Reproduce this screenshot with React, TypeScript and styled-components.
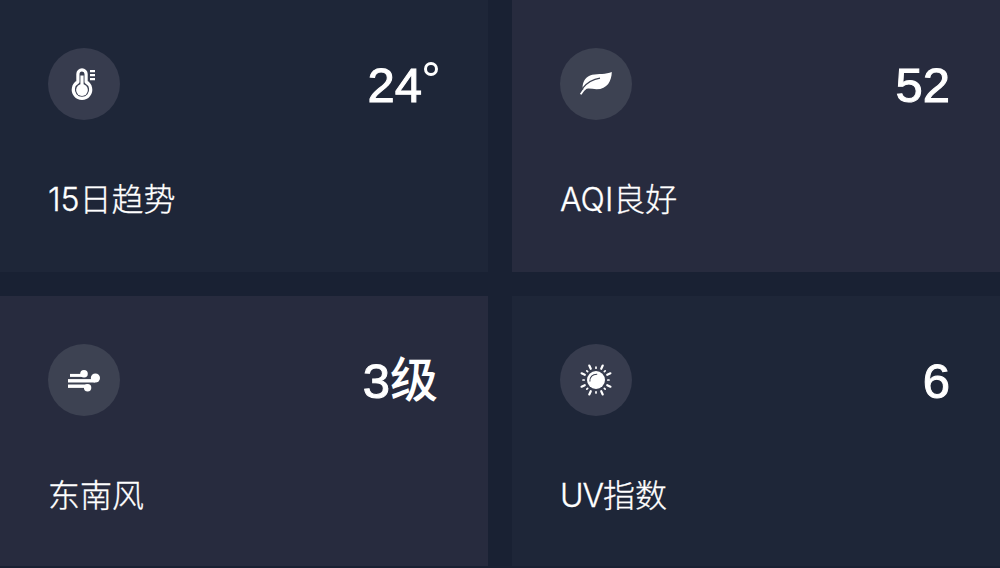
import React from 'react';
import styled, { createGlobalStyle } from 'styled-components';

type Tone = 'navy' | 'slate';

interface Metric {
  id: string;
  tone: Tone;
  icon: React.ReactNode;
  value: string;
  unit?: string;
  degree?: boolean;
  prefix?: string;
  label: string;
}

const GlobalStyle = createGlobalStyle`
  * {
    box-sizing: border-box;
  }

  body {
    margin: 0;
    background-color: #192133;
    overflow: hidden;
  }
`;

const Grid = styled.main`
  display: grid;
  grid-template-columns: 488px 488px;
  grid-template-rows: 272px 270px;
  gap: 24px;
  width: 1000px;
  height: 568px;
  overflow: hidden;
  color: #fff;
  font-family: Inter, 'Noto Sans CJK SC', sans-serif;
`;

const Card = styled.section<{ $tone: Tone }>`
  padding: 48px 50px 0 48px;
  background-color: ${props => props.$tone === 'navy' ? '#1e2638' : '#272b3e'};
`;

const CardHeader = styled.div`
  display: flex;
  align-items: center;
  justify-content: space-between;
  height: 72px;
`;

const IconCircle = styled.div<{ $tone: Tone }>`
  display: flex;
  align-items: center;
  justify-content: center;
  width: 72px;
  height: 72px;
  border-radius: 50%;
  background-color: ${props => props.$tone === 'navy' ? '#373c4e' : '#3d4252'};
`;

const Value = styled.div`
  display: flex;
  align-items: center;
  height: 72px;
  padding-top: 2px;
  font-family: 'Liberation Sans', sans-serif;
  font-size: 49px;
  font-weight: 400;
  line-height: 70px;
  white-space: nowrap;
  -webkit-text-stroke: 1px #fff;
`;

const Unit = styled.span`
  margin: -10px 0 0 0;
  font-family: 'Noto Sans CJK SC', sans-serif;
  font-size: 48px;
  font-weight: 500;
  -webkit-text-stroke: 0;
`;

const Degree = styled.span`
  align-self: flex-start;
  width: 14px;
  height: 14px;
  margin: 12px 0 0 2px;
  border: 3px solid #fff;
  border-radius: 50%;
`;

const Label = styled.div`
  margin-top: 57px;
  font-size: 32px;
  font-weight: 300;
  line-height: 46px;
  white-space: nowrap;
  -webkit-text-stroke: 0.3px #fff;
`;

const Latin = styled.span<{ $tight?: boolean }>`
  letter-spacing: ${props => props.$tight ? '-1px' : '0'};
`;

const Icon: React.FC<{ children: React.ReactNode }> = ({ children }) => (
  <svg width="32" height="32" viewBox="0 0 32 32" fill="none">
    {children}
  </svg>
);

const ThermometerIcon = () => (
  <Icon>
    <path
      d="M9.9 14V6a4.1 4.1 0 0 1 8.2 0V14a8.7 8.7 0 1 1-8.2 0Z"
      stroke="#fff"
      strokeWidth="3.2"
      strokeLinejoin="round"
    />
    <path d="M14 7.5V21" stroke="#fff" strokeWidth="3.2" />
    <circle cx="14" cy="22" r="5.9" fill="#fff" />
    <path d="M22 3.1h5M22 7.1h5M22 11.1h5" stroke="#fff" strokeWidth="2.2" />
  </Icon>
);

const LeafIcon = () => (
  <Icon>
    <path
      d="M31.8 3.9C31.6 12.5 27.5 21.2 16.5 21.2 12 21.2 8 19.7 4.5 21.5L2.5 19.7C2.8 13 6 8 12.2 6.7 18.5 5.5 26 6.5 31.8 3.9Z"
      fill="#fff"
    />
    <path d="M2.5 20.3C7 14.8 12.5 11.3 20 10.2" stroke="#3d4252" strokeWidth="1.3" />
    <path d="M.7 26.3C2.2 23.5 4 21.5 6.3 19.8" stroke="#fff" strokeWidth="1.7" />
  </Icon>
);

const WindIcon = () => (
  <Icon>
    <path d="M2 11.4h14" stroke="#fff" strokeWidth="3" />
    <path d="M0 16.8h27" stroke="#fff" strokeWidth="3.4" />
    <path d="M0 22.2h19" stroke="#fff" strokeWidth="3.4" />
    <circle cx="16" cy="9.7" r="3.8" fill="#fff" />
    <circle cx="27.4" cy="14" r="4.6" fill="#fff" />
    <circle cx="19.6" cy="23.7" r="3.7" fill="#fff" />
  </Icon>
);

const LONG_RAYS = [25, 65, 115, 155, 205, 245, 295, 335];
const SHORT_RAYS = [0, 45, 90, 135, 180, 225, 270, 315];

const SunIcon = () => (
  <Icon>
    <circle cx="16" cy="16" r="9" fill="#fff" />
    <path d="M9.9 17.5c-.5-4.5 2.7-7.5 7.3-7.3" stroke="#373c4e" strokeWidth="1.1" />
    <g stroke="#fff" strokeLinecap="round">
      {LONG_RAYS.map(angle => (
        <path key={angle} d="M16 .1v3.5" strokeWidth="2.2" transform={`rotate(${angle} 16 16)`} />
      ))}
      {SHORT_RAYS.map(angle => (
        <path key={angle} d="M16 3v1.2" strokeWidth="1.7" transform={`rotate(${angle} 16 16)`} />
      ))}
    </g>
  </Icon>
);

const metrics: Metric[] = [
  { id: 'trend', tone: 'navy', icon: <ThermometerIcon />, value: '24', degree: true, prefix: '15', label: '日趋势' },
  { id: 'air', tone: 'slate', icon: <LeafIcon />, value: '52', prefix: 'AQI', label: '良好' },
  { id: 'wind', tone: 'slate', icon: <WindIcon />, value: '3', unit: '级', label: '东南风' },
  { id: 'uv', tone: 'navy', icon: <SunIcon />, value: '6', prefix: 'UV', label: '指数' },
];

const App: React.FC = () => (
  <>
    <GlobalStyle />
    <Grid>
      {metrics.map(metric => (
        <Card key={metric.id} $tone={metric.tone}>
          <CardHeader>
            <IconCircle $tone={metric.tone}>{metric.icon}</IconCircle>
            <Value>
              {metric.value}
              {metric.unit && <Unit>{metric.unit}</Unit>}
              {metric.degree && <Degree />}
            </Value>
          </CardHeader>
          <Label>
            {metric.prefix && <Latin $tight={metric.id === 'uv'}>{metric.prefix}</Latin>}
            {metric.label}
          </Label>
        </Card>
      ))}
    </Grid>
  </>
);

export default App;
